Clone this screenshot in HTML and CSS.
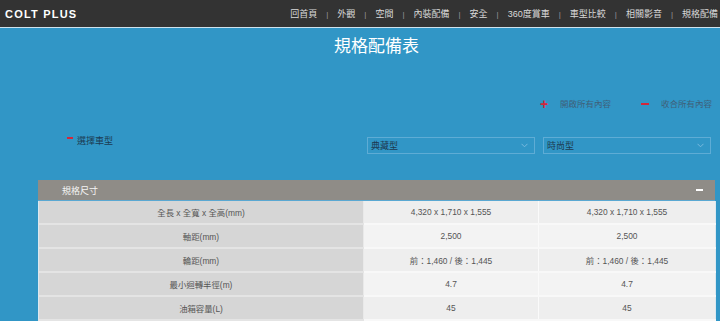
FILE: index.html
```html
<!DOCTYPE html>
<html lang="zh-Hant">
<head>
    <meta charset="UTF-8">
    <meta name="viewport" content="width=device-width, initial-scale=1.0">
    <title>COLT PLUS 規格配備表</title>
    <link rel="stylesheet" href="styles.css">
</head>
<body>
    <header class="topbar">
        <div class="logo">COLT PLUS</div>
        <nav class="menu">
            <a href="#">回首頁</a>
            <a href="#">外觀</a>
            <a href="#">空間</a>
            <a href="#">內裝配備</a>
            <a href="#">安全</a>
            <a href="#">360度賞車</a>
            <a href="#">車型比較</a>
            <a href="#">相關影音</a>
            <a href="#">規格配備</a>
        </nav>
    </header>

    <main class="spec">
        <h1 class="spec-title">規格配備表</h1>

        <div class="toolbar">
            <a href="#" class="tool"><span class="tool-icon">+</span>開啟所有內容</a>
            <a href="#" class="tool"><span class="tool-icon minus"></span>收合所有內容</a>
        </div>

        <div class="picker">
            <div class="picker-label"><span class="dash"></span>選擇車型</div>
            <div class="select first">
                <span>典藏型</span>
                <svg width="7" height="5" viewBox="0 0 7 5"><path d="M0.5 0.8 L3.5 3.8 L6.5 0.8" fill="none" stroke="#7fbde0" stroke-width="0.9"/></svg>
            </div>
            <div class="select second">
                <span>時尚型</span>
                <svg width="7" height="5" viewBox="0 0 7 5"><path d="M0.5 0.8 L3.5 3.8 L6.5 0.8" fill="none" stroke="#7fbde0" stroke-width="0.9"/></svg>
            </div>
        </div>

        <section class="group">
            <div class="group-head">
                <span>規格尺寸</span>
                <span class="group-toggle"></span>
            </div>
            <table class="spec-table">
                <colgroup>
                    <col class="c-label">
                    <col class="c-val">
                    <col class="c-val2">
                </colgroup>
                <tr>
                    <th>全長 x 全寬 x 全高(mm)</th>
                    <td>4,320 x 1,710 x 1,555</td>
                    <td>4,320 x 1,710 x 1,555</td>
                </tr>
                <tr>
                    <th>軸距(mm)</th>
                    <td>2,500</td>
                    <td>2,500</td>
                </tr>
                <tr>
                    <th>輪距(mm)</th>
                    <td>前：1,460 / 後：1,445</td>
                    <td>前：1,460 / 後：1,445</td>
                </tr>
                <tr>
                    <th>最小迴轉半徑(m)</th>
                    <td>4.7</td>
                    <td>4.7</td>
                </tr>
                <tr>
                    <th>油箱容量(L)</th>
                    <td>45</td>
                    <td>45</td>
                </tr>
            </table>
        </section>
    </main>
</body>
</html>
```

FILE: styles.css
```css
:root {
    --blue: #3196c6;
    --bar: #333333;
    --red: #d3273a;
    --label-bg: #d6d6d6;
    --cell-bg: #eeeeee;
    --cell-alt: #f3f3f3;
}

body {
    margin: 0;
    padding: 0;
    background-color: var(--blue);
    font-family: "Liberation Sans", "Noto Sans CJK TC", sans-serif;
    overflow: hidden;
}

/* 上方導覽列 */
.topbar {
    height: 27px;
    background-color: var(--bar);
    border-bottom: 1px solid #cfe3ee;
    display: flex;
    align-items: center;
    justify-content: space-between;
    padding: 0 2px 0 5px;
}

.logo {
    color: #ffffff;
    font-weight: bold;
    font-size: 11px;
    letter-spacing: 1.2px;
}

.menu {
    display: flex;
    align-items: center;
}

.menu a {
    color: #d9d9d9;
    font-size: 9px;
    text-decoration: none;
}

.menu a + a::before {
    content: "|";
    color: #9a9a9a;
    margin: 0 9px;
    font-size: 8px;
}

/* 內容 */
.spec {
    padding: 0 5px 0 38px;
}

.spec-title {
    margin: 9px 0 0;
    font-size: 17px;
    line-height: 20px;
    font-weight: normal;
    color: #ffffff;
    text-align: center;
}

.toolbar {
    margin-top: 41px;
    display: flex;
    justify-content: flex-end;
    gap: 29px;
    padding-right: 3px;
    height: 12px;
}

.tool {
    display: flex;
    align-items: center;
    gap: 12px;
    color: #3f6079;
    font-size: 8.5px;
    text-decoration: none;
    line-height: 12px;
}

.tool-icon {
    color: var(--red);
    font-size: 14px;
    font-weight: bold;
    width: 8px;
    line-height: 12px;
    text-align: center;
}

.tool-icon.minus {
    height: 1.5px;
    background-color: var(--red);
    margin-left: 1px;
}

.picker {
    margin-top: 27px;
    display: grid;
    grid-template-columns: 325px 175px 177px;
    align-items: start;
}

.picker-label {
    display: flex;
    align-items: center;
    padding-left: 29px;
    color: #1c3b52;
    font-size: 9px;
    line-height: 11px;
    margin-top: -1px;
}

.dash {
    width: 6px;
    height: 1.5px;
    background-color: var(--red);
    margin-right: 4px;
    align-self: flex-start;
    margin-top: 1px;
}

.select {
    height: 17px;
    box-sizing: border-box;
    border: 1px solid #5eacd5;
    display: flex;
    align-items: center;
    justify-content: space-between;
    padding: 0 6px 0 3px;
    color: #1d3a50;
    font-size: 9px;
}

.select.first {
    margin-left: 4px;
    width: 168px;
}

.select.second {
    margin-left: 5px;
    width: 168px;
}

/* 規格表 */
.group {
    margin-top: 26px;
}

.group-head {
    height: 20px;
    background-color: #8f8c87;
    color: #f4f4f4;
    font-size: 9px;
    display: flex;
    align-items: center;
    justify-content: space-between;
    padding: 0 12px 0 24px;
    border-bottom: 1px solid #5aa8d2;
}

.group-toggle {
    width: 7px;
    height: 1.5px;
    background-color: #ffffff;
}

.spec-table {
    width: 677px;
    border-collapse: collapse;
    table-layout: fixed;
    border-left: 1px solid #dbe8f0;
    border-right: 1px solid #dbe8f0;
}

.c-label { width: 325px; }
.c-val { width: 175px; }
.c-val2 { width: 177px; }

.spec-table th,
.spec-table td {
    height: 22px;
    padding: 0;
    text-align: center;
    font-weight: normal;
    font-size: 8.4px;
    color: #555555;
    border-bottom: 2px solid #e4e4e4;
}

.spec-table th {
    background-color: var(--label-bg);
    border-right: 1px solid #e9e9e9;
}

.spec-table td {
    background-color: var(--cell-bg);
    border-bottom-color: #f8f8f8;
}

.spec-table td + td {
    border-left: 1px solid #fafafa;
}

.spec-table tr:nth-child(even) td {
    background-color: var(--cell-alt);
}
```
